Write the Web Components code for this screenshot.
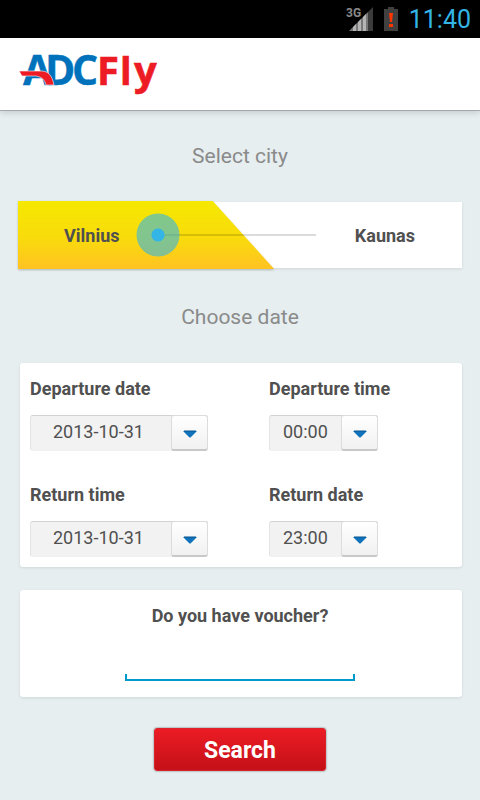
<!DOCTYPE html>
<html lang="en">
<head>
<meta charset="utf-8">
<meta name="viewport" content="width=device-width, initial-scale=1">
<title>ADCFly</title>
<style>
  body { margin: 0; min-height: 100vh; background: #e6eef0; color: #505050; font-family: Roboto, "Noto Sans", sans-serif; }
</style>
</head>
<body>
<flight-app></flight-app>

<script>
const define = (name, html, setup) => {
  const template = document.createElement('template');
  template.innerHTML = html;
  customElements.define(name, class extends HTMLElement {
    constructor() {
      super();
      this.attachShadow({ mode: 'open' }).append(template.content.cloneNode(true));
    }
    connectedCallback() {
      if (setup) setup(this, this.shadowRoot);
    }
  });
};

define('status-bar', `
  <style>
    :host { display: flex; justify-content: flex-end; align-items: center; height: 38px; padding-right: 9px; background: #000; color: #33b5e5; font-size: 25px; }
    svg { display: block; }
    .signal { margin-right: 9px; }
    .battery { margin-right: 10px; }
  </style>
  <svg class="signal" width="28" height="26" viewBox="0 0 28 26" role="img" aria-label="Mobile signal">
    <path d="M27 1V25H22V6Z" fill="#3b3b3b"/>
    <path d="M22 6V25H3Z" fill="#777"/>
    <path d="M20 8V25H17V11ZM15 13V25H12V16ZM10 18V25H7V21Z" fill="#b4b4b4"/>
    <text x="0" y="11" font-size="12" font-weight="700" fill="#8a8a8a">3G</text>
  </svg>
  <svg class="battery" width="16" height="26" viewBox="0 0 16 26" role="img" aria-label="Battery low">
    <path d="M1 3H5V1H11V3H15V25H1Z" fill="#404040"/>
    <path d="M6 7H10L9 16H7Z" fill="#ff3500"/>
    <rect x="6" y="18" width="4" height="3" fill="#ff3500"/>
  </svg>
  <time>11:40</time>
`);

define('brand-logo', `
  <style>
    :host { display: block; }
    svg { display: block; font: 700 40px "Open Sans", "Noto Sans", sans-serif; }
  </style>
  <svg width="144" height="64" viewBox="0 0 144 64" role="img" aria-label="ADCFly">
    <g fill="#0072bc" stroke="#0072bc" stroke-width=".4" font-size="41">
      <text x="5 27 54" y="43">ADC</text>
    </g>
    <path d="M1 29H23C30 29 34 33 36 43H28C27 38 24 35 18 34H4Z" fill="#ed1c24" stroke="#fff" stroke-width=".6"/>
    <g fill="#ed1c24" stroke="#ed1c24" stroke-width=".6">
      <text x="79" y="43">F<tspan x="102" font-size="38">l</tspan><tspan x="116">y</tspan></text>
    </g>
  </svg>
`);

define('app-header', `
  <style>
    :host { display: flex; align-items: center; height: 73px; padding: 0 18px; box-sizing: border-box; background: #fff; border-bottom: 1px solid #a3a8aa; box-shadow: 0 2px 6px rgba(0,0,0,.14); }
  </style>
  <slot></slot>
`);

define('section-title', `
  <style>
    :host { display: block; text-align: center; color: #8a8a8a; }
    h2 { margin: 0; font-size: 21px; line-height: 28px; font-weight: 400; }
  </style>
  <h2><slot></slot></h2>
`);

define('panel-card', `
  <style>
    :host { display: block; background: #fff; border-radius: 3px; box-shadow: 0 1px 3px rgba(0,0,0,.1); }
  </style>
  <slot></slot>
`);

define('city-switch', `
  <style>
    :host { display: flex; align-items: center; gap: 17px; position: relative; height: 66px; padding: 0 47px 0 44px; background: #fff; font-size: 18px; font-weight: 700; box-shadow: 0 1px 3px rgba(0,0,0,.1); }
    .shade { position: absolute; inset: -1px 42.5% -1px -2px; filter: drop-shadow(0 1px 1px rgba(0,0,0,.2)); }
    .shade::before { content: ""; display: block; height: 100%; background: linear-gradient(#f5e800, #f9db0c 55%, #ffc222); clip-path: polygon(0 0, 76% 0, 100% 100%, 0 100%); }
    span, input { position: relative; }
    input { appearance: none; flex: 1; min-width: 0; height: 44px; margin: 0; background: linear-gradient(rgba(0,0,0,.14), rgba(0,0,0,.14)) center / calc(100% - 44px) 2px no-repeat; outline: none; }
    input::-webkit-slider-thumb { appearance: none; width: 44px; height: 44px; border: 0; border-radius: 50%; background: radial-gradient(circle, #33b5e5 0 6px, rgba(51,181,229,.6) 7px 21px, transparent 22px); }
  </style>
  <div class="shade"></div>
  <span><slot name="from"></slot></span>
  <input type="range" min="0" max="1" value="0" aria-label="City">
  <span><slot name="to"></slot></span>
`);

define('picker-field', `
  <style>
    :host { display: block; }
    label { display: block; margin-bottom: 16px; font-size: 18px; line-height: 20px; font-weight: 700; }
    .box { display: grid; grid-template-columns: 1fr 37px; width: 178px; height: 36px; }
    :host([short]) .box { width: 109px; }
    select { grid-area: 1 / 1 / 2 / 3; appearance: none; min-width: 0; margin: 0; padding: 0 40px 3px 22px; border: 1px solid #e4e4e4; border-top-color: #d2d2d2; border-bottom-color: #f1f1f1; border-radius: 3px; background: #f2f2f2; color: #505050; font: 18px Roboto, "Noto Sans", sans-serif; outline: none; }
    :host([short]) select { padding-left: 13px; }
    .arrow { grid-area: 1 / 2; display: grid; place-items: center; z-index: 1; pointer-events: none; box-sizing: border-box; border: 1px solid #dcdcdc; border-bottom: 2px solid #c8c8c8; border-radius: 3px; background: linear-gradient(#fff, #f1f1f1); }
    svg { margin-top: 3px; }
  </style>
  <label for="value"></label>
  <div class="box">
    <select id="value"><option></option></select>
    <span class="arrow"><svg width="14" height="8" viewBox="0 0 14 8" aria-hidden="true"><path d="M0 1H14L8 7Q7 8 6 7Z" fill="#0f72ba"/><path d="M1 1H13" stroke="#075493"/></svg></span>
  </div>
`, (host, root) => {
  root.querySelector('label').textContent = host.getAttribute('label');
  root.querySelector('option').textContent = host.getAttribute('value');
});

define('date-form', `
  <style>
    :host { display: grid; grid-template-columns: 239fr 183fr; row-gap: 34px; padding: 16px 10px 10px; }
  </style>
  <picker-field label="Departure date" value="2013-10-31"></picker-field>
  <picker-field short label="Departure time" value="00:00"></picker-field>
  <picker-field label="Return time" value="2013-10-31"></picker-field>
  <picker-field short label="Return date" value="23:00"></picker-field>
`);

define('voucher-field', `
  <style>
    :host { display: flex; flex-direction: column; align-items: center; padding: 16px 12px 16px 10px; }
    label { font-size: 18px; line-height: 20px; font-weight: 700; }
    input { width: 230px; max-width: 100%; height: 45px; box-sizing: border-box; margin: 10px 0 0; padding: 0 8px; border: 0; color: inherit; font: 18px Roboto, "Noto Sans", sans-serif; outline: none;
      background: linear-gradient(#0099cc, #0099cc) bottom / 100% 2px no-repeat, linear-gradient(#0099cc, #0099cc) left bottom / 2px 7px no-repeat, linear-gradient(#0099cc, #0099cc) right bottom / 2px 7px no-repeat; }
  </style>
  <label for="voucher">Do you have voucher?</label>
  <input id="voucher" type="text">
`);

define('search-button', `
  <style>
    :host { display: flex; justify-content: center; }
    button { width: 172px; height: 43px; padding: 1px 0 0; border: 1px solid #d9222a; border-radius: 3px; background: linear-gradient(#ec1c24, #c41018); color: #fff; font: 700 23px Roboto, "Noto Sans", sans-serif; box-shadow: 0 0 2px rgba(0,0,0,.6); }
  </style>
  <button type="button"><slot></slot></button>
`);

define('flight-app', `
  <style>
    :host { display: block; }
    main { display: flex; flex-direction: column; padding: 31px 0 28px; }
    city-switch { margin: 32px 18px 35px 20px; }
    panel-card { margin: 0 18px 0 20px; }
    .dates { margin-top: 32px; margin-bottom: 23px; }
    search-button { margin-top: 31px; }
  </style>
  <status-bar></status-bar>
  <app-header><brand-logo></brand-logo></app-header>
  <main>
    <section-title>Select city</section-title>
    <city-switch><span slot="from">Vilnius</span><span slot="to">Kaunas</span></city-switch>
    <section-title>Choose date</section-title>
    <panel-card class="dates"><date-form></date-form></panel-card>
    <panel-card><voucher-field></voucher-field></panel-card>
    <search-button>Search</search-button>
  </main>
`);
</script>
</body>
</html>
